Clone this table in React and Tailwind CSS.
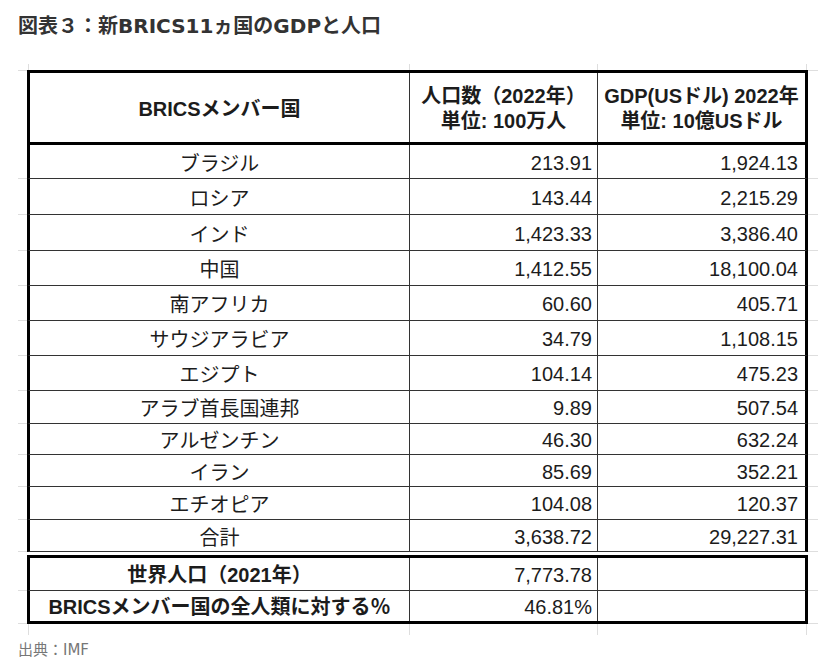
import React from "react";

const rows = [
  { name: "ブラジル", pop: "213.91", gdp: "1,924.13", h: "h-[34px]" },
  { name: "ロシア", pop: "143.44", gdp: "2,215.29", h: "h-[36px]" },
  { name: "インド", pop: "1,423.33", gdp: "3,386.40", h: "h-[36px]" },
  { name: "中国", pop: "1,412.55", gdp: "18,100.04", h: "h-[35px]" },
  { name: "南アフリカ", pop: "60.60", gdp: "405.71", h: "h-[35px]" },
  { name: "サウジアラビア", pop: "34.79", gdp: "1,108.15", h: "h-[35px]" },
  { name: "エジプト", pop: "104.14", gdp: "475.23", h: "h-[35px]" },
  { name: "アラブ首長国連邦", pop: "9.89", gdp: "507.54", h: "h-[33px]" },
  { name: "アルゼンチン", pop: "46.30", gdp: "632.24", h: "h-[31px]" },
  { name: "イラン", pop: "85.69", gdp: "352.21", h: "h-[32px]" },
  { name: "エチオピア", pop: "104.08", gdp: "120.37", h: "h-[33px]" },
  { name: "合計", pop: "3,638.72", gdp: "29,227.31", h: "h-[32px]" },
];

// spreadsheet gridline stubs either side of a row
const Stub = ({ w }) => <div className={`${w} shrink-0 border-b border-[#dedede]`} />;

const GridTicks = ({ h }) => (
  <div className={`flex ${h}`}>
    <div className="w-[9px] shrink-0" />
    <div className="flex w-[781px]">
      <div className="ml-[1px] w-[382px] border-x border-[#dedede]" />
      <div className="w-[188px] border-r border-[#dedede]" />
      <div className="w-[209px] border-r border-[#dedede]" />
    </div>
  </div>
);

export default function App() {
  return (
    <div className="min-h-screen bg-white pl-[18px] pt-[14px] text-[#1c1c1c] font-['Liberation_Sans','Noto_Sans_CJK_JP',sans-serif]">
      <h2 className="text-[20px] font-bold leading-[24px] text-[#333] font-['DejaVu_Sans','Noto_Sans_CJK_JP',sans-serif]">
        図表３：新BRICS11ヵ国のGDPと人口
      </h2>

      <div className="mt-[26px] w-[800px]">
        <GridTicks h="h-[6px]" />

        {/* header */}
        <div className="flex h-[75px]">
          <div className="w-[9px] shrink-0 border-t border-[#dedede]" />
          <div className="flex w-[781px] border-x-[3px] border-y-[3px] border-black font-bold text-[20px] leading-[25px]">
            <div className="flex w-[380px] items-center justify-center border-r border-[#333] pt-[3px]">
              BRICSメンバー国
            </div>
            <div className="flex w-[188px] flex-col items-center justify-center border-r border-[#333] pt-[3px]">
              <span>人口数（2022年）</span>
              <span>単位: 100万人</span>
            </div>
            <div className="flex flex-1 flex-col items-center justify-center pt-[3px]">
              <span>GDP(USドル) 2022年</span>
              <span>単位: 10億USドル</span>
            </div>
          </div>
          <div className="w-[10px] shrink-0 border-t border-[#dedede]" />
        </div>

        {rows.map((r) => (
          <div key={r.name} className={`flex ${r.h}`}>
            <Stub w="w-[9px]" />
            <div className="flex w-[781px] border-x-[3px] border-b border-x-black border-b-[#333] text-[20px]">
              <div className="flex w-[380px] items-center justify-center border-r border-[#333] pt-[4px]">{r.name}</div>
              <div className="flex w-[188px] items-center justify-end border-r border-[#333] pr-[5px] pt-[2px]">{r.pop}</div>
              <div className="flex flex-1 items-center justify-end pr-[7px] pt-[2px]">{r.gdp}</div>
            </div>
            <Stub w="w-[10px]" />
          </div>
        ))}

        <div className="h-[3px]" />

        <div className="flex h-[36px]">
          <Stub w="w-[9px]" />
          <div className="flex w-[781px] border-x-[3px] border-t-[3px] border-b border-x-black border-t-black border-b-[#333] text-[20px]">
            <div className="flex w-[380px] items-center justify-center border-r border-[#333] pt-[2px] font-bold">世界人口（2021年）</div>
            <div className="flex w-[188px] items-center justify-end border-r border-[#333] pr-[5px] pt-[1px]">7,773.78</div>
            <div className="flex-1" />
          </div>
          <Stub w="w-[10px]" />
        </div>

        <div className="flex h-[33px]">
          <Stub w="w-[9px]" />
          <div className="flex w-[781px] border-x-[3px] border-b-[3px] border-black text-[20px]">
            <div className="flex w-[380px] items-center justify-center border-r border-[#333] pt-[2px] font-bold">BRICSメンバー国の全人類に対する％</div>
            <div className="flex w-[188px] items-center justify-end border-r border-[#333] pr-[5px] pt-[1px]">46.81%</div>
            <div className="flex-1" />
          </div>
          <Stub w="w-[10px]" />
        </div>

        <GridTicks h="h-[11px]" />
      </div>

      <p className="mt-[5px] text-[15px] leading-[20px] text-[#777] font-['DejaVu_Sans','Noto_Sans_CJK_JP',sans-serif]">
        出典：IMF
      </p>
    </div>
  );
}
